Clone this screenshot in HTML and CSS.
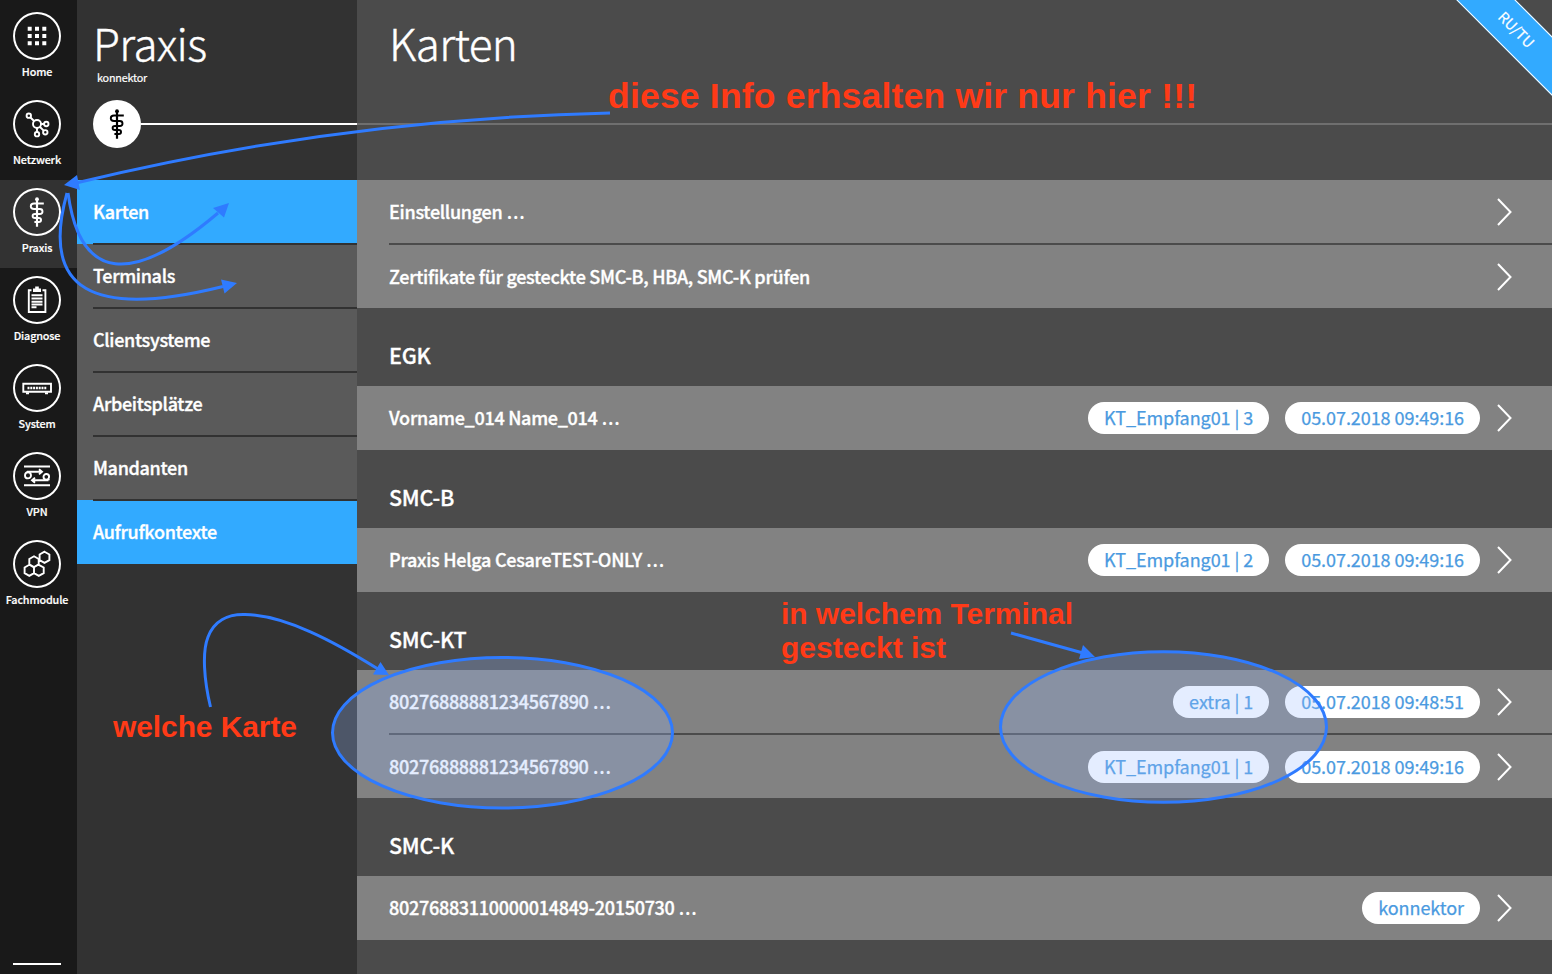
FILE: index.html
```html
<!DOCTYPE html>
<html lang="de">
<head>
<meta charset="utf-8">
<title>Praxis – Karten</title>
<link rel="stylesheet" href="styles.css">
</head>
<body>
<svg class="defs" aria-hidden="true">
  <symbol id="staff" viewBox="-24 -24 48 48">
    <circle cx="0" cy="-12.800" r="1.900" fill="currentColor"/>
    <path d="M0-13V14.700" stroke="currentColor" stroke-width="2.200" fill="none"/>
    <path d="M6.800-8.500H-3C-7.300-8.500-7.300-3-3-3H2.800C6.400-3 6.400 2 2.800 2H-2C-5.200 2-5.200 6-2 6H1.800C4.800 6 4.800 10 1.800 10H-2.600" stroke="currentColor" stroke-width="1.900" fill="none"/>
  </symbol>
  <symbol id="chevron" viewBox="0 0 16 28">
    <path d="M2 1L14.500 14L2 27" stroke="#fff" stroke-width="2" fill="none"/>
  </symbol>
</svg>
<div class="app">
  <nav class="rail">
    <a class="rail-item"><svg class="ring" viewBox="-24 -24 48 48"><path fill="#fff" d="M-9.300-9.300h4v4h-4zM-2-9.300h4v4h-4zM5.300-9.300h4v4h-4zM-9.300-2h4v4h-4zM-2-2h4v4h-4zM5.300-2h4v4h-4zM-9.300 5.300h4v4h-4zM-2 5.300h4v4h-4zM5.300 5.300h4v4h-4z"/></svg><span>Home</span></a>
    <a class="rail-item"><svg class="ring line" viewBox="-24 -24 48 48"><circle r="4"/><circle cx="-8.200" cy="-8.300" r="2.200"/><circle cx="9.300" cy="0" r="2.200"/><circle cx="0" cy="10.200" r="2.200"/><circle cx="8.300" cy="8.300" r="2.200"/><path d="M-6.500-6.500L-3-3M4 0H7M0 4V8M3 3L6.700 6.700"/></svg><span>Netzwerk</span></a>
    <a class="rail-item current"><svg class="ring"><use href="#staff"/></svg><span>Praxis</span></a>
    <a class="rail-item"><svg class="ring line" viewBox="-24 -24 48 48"><path d="M-5.500-9.800H-8.200V12H8.400V-9.800H5.500M-5.500-4.700H5.500M-5.500-1.500H5.500M-5.500 1.700H5.500M-5.500 4.500H5.500M-5.500 7.200H-.5"/><path fill="#fff" stroke="none" d="M-4-11.500H-1.800V-13.500H1.800V-11.500H4V-8H-4z"/></svg><span>Diagnose</span></a>
    <a class="rail-item"><svg class="ring line" viewBox="-24 -24 48 48"><path d="M-13.700-4.200H14V3.800H-13.700z"/><path d="M-9.500 0H10" stroke-width="2.400" stroke-dasharray="2 .8"/><path d="M-11 5.200H-8M8 5.200H11"/></svg><span>System</span></a>
    <a class="rail-item"><svg class="ring line" viewBox="-24 -24 48 48"><path d="M-13-9.500H13M-13 9.200H13M-10-4.200H5M2-6.800L5-4.200L2-1.600M11.500 4.200H-5M-2 1.600L-5 4.200L-2 6.800M-10-4.200L-10.800-3M11.500 4.200L12 3"/><circle cx="-9" cy="-.6" r="3"/><circle cx="9.300" cy=".8" r="2.800"/></svg><span>VPN</span></a>
    <a class="rail-item"><svg class="ring line" viewBox="-24 -24 48 48"><path d="M7.500-12.300l4.900 2.800v5.600L7.500-1.100L2.600-3.900v-5.600zM-3-7.700l4.700 2.700v5.400L-3 3.100L-7.700 .4V-5zM-7.700 .8l4.700 2.700v5.600l-4.700 2.700l-4.700-2.700V3.500zM1.800 .8l4.900 2.700v5.600L1.800 11.800L-3 9.100"/></svg><span>Fachmodule</span></a>
    <div class="rail-end"></div>
  </nav>
  <aside class="sub">
    <header class="sub-head">
      <h1>Praxis</h1>
      <p>konnektor</p>
      <div class="track"><svg class="disc"><use href="#staff"/></svg><i></i></div>
    </header>
    <a class="menu on"><span>Karten</span></a>
    <a class="menu"><span>Terminals</span></a>
    <a class="menu"><span>Clientsysteme</span></a>
    <a class="menu"><span>Arbeitsplätze</span></a>
    <a class="menu"><span>Mandanten</span></a>
    <a class="menu on"><span>Aufrufkontexte</span></a>
  </aside>
  <main class="main">
    <header class="main-head"><h1>Karten</h1></header>
    <section class="group">
      <div class="row"><b>Einstellungen <i>…</i></b><svg class="chev"><use href="#chevron"/></svg></div>
      <div class="row"><b>Zertifikate für gesteckte SMC-B, HBA, SMC-K prüfen</b><svg class="chev"><use href="#chevron"/></svg></div>
    </section>
    <h2>EGK</h2>
    <section class="group">
      <div class="row"><b>Vorname_014 Name_014 <i>…</i></b><span class="pill">KT_Empfang01 | 3</span><span class="pill">05.07.2018 09:49:16</span><svg class="chev"><use href="#chevron"/></svg></div>
    </section>
    <h2>SMC-B</h2>
    <section class="group">
      <div class="row"><b>Praxis Helga CesareTEST-ONLY <i>…</i></b><span class="pill">KT_Empfang01 | 2</span><span class="pill">05.07.2018 09:49:16</span><svg class="chev"><use href="#chevron"/></svg></div>
    </section>
    <h2>SMC-KT</h2>
    <section class="group">
      <div class="row"><b>80276888881234567890 <i>…</i></b><span class="pill">extra | 1</span><span class="pill">05.07.2018 09:48:51</span><svg class="chev"><use href="#chevron"/></svg></div>
      <div class="row"><b>80276888881234567890 <i>…</i></b><span class="pill">KT_Empfang01 | 1</span><span class="pill">05.07.2018 09:49:16</span><svg class="chev"><use href="#chevron"/></svg></div>
    </section>
    <h2>SMC-K</h2>
    <section class="group">
      <div class="row"><b>80276883110000014849-20150730 <i>…</i></b><span class="pill">konnektor</span><svg class="chev"><use href="#chevron"/></svg></div>
    </section>
  </main>
  <div class="ribbon">RU/TU</div>
  <svg class="notes" viewBox="0 0 1552 974">
    <g class="area">
      <ellipse cx="502.500" cy="732.700" rx="170" ry="75.300"/>
      <ellipse cx="1163.500" cy="727" rx="163" ry="75.300"/>
    </g>
    <g class="stroke">
      <path d="M610 113Q340 119 76 183"/>
      <path d="M68 193C80 282 132 286 218 213"/>
      <path d="M67 193C40 290 92 319 223 286.500"/>
      <path d="M210.500 707C204 680 202 652 208 637C214 621 228 614 245 614.500C285 615 335 642 378 669"/>
      <path d="M1011 633L1083 653"/>
    </g>
    <path class="tips" d="M64 185L77 175L80 190zM229 203L213 208L224 217.500zM237 283L221 279.500L224.500 293.500zM389 675L380.500 662L373 674.500zM1095 657L1083 645L1079 659z"/>
    <g class="words">
      <text x="608" y="107.500" font-size="35.500" textLength="589">diese Info erhsalten wir nur hier !!!</text>
      <text x="781" y="624" font-size="30" textLength="292">in welchem Terminal</text>
      <text x="781" y="658" font-size="30" textLength="165">gesteckt ist</text>
      <text x="113" y="736.500" font-size="30" textLength="184">welche Karte</text>
    </g>
  </svg>
</div>
</body>
</html>
```
FILE: styles.css
```css
* { box-sizing: border-box; margin: 0; padding: 0; }
body { background: #4b4b4b; color: #fff; font-family: "Noto Sans CJK SC", "Noto Sans", sans-serif; overflow: hidden; }
.defs { position: absolute; width: 0; height: 0; }
.app { position: relative; display: flex; width: 1552px; height: 974px; overflow: hidden; }

.rail { display: flex; flex-direction: column; width: 77px; padding: 4px 0 9px; background: #191919; }
.rail-item { display: flex; flex-direction: column; align-items: center; height: 88px; padding: 8px 3px 0 0; font-size: 10.8px; font-weight: 500; line-height: 16px; letter-spacing: -.15px; -webkit-text-stroke: .2px #fff; }
.rail-item.current { background: #323232; }
.rail-item span { margin-top: 3px; white-space: nowrap; }
.ring { display: block; width: 48px; height: 48px; border-radius: 50%; box-shadow: inset 0 0 0 2px #fff; color: #fff; }
.line { fill: none; stroke: #fff; stroke-width: 1.9; }
.rail-end { width: 48px; height: 2px; margin: auto 0 0 13px; background: #fff; }

.sub { width: 280px; background: #323232; }
.sub-head { height: 180px; padding: 14px 0 0 16px; }
h1 { font-size: 44px; font-weight: 300; line-height: 56px; letter-spacing: -.6px; -webkit-text-stroke: .4px #fff; }
.sub-head p { width: 60px; margin: 0 0 0 4px; font-size: 10.8px; line-height: 14px; letter-spacing: -.2px; -webkit-text-stroke: .2px #fff; }
.track { display: flex; align-items: center; margin-top: 16px; }
.disc { width: 48px; height: 48px; border-radius: 50%; background: #fff; color: #000; }
.track i { flex: 1; height: 2px; background: #fff; }
.menu { position: relative; display: block; height: 64px; padding-left: 16px; background: #5a5a5a; font-size: 18px; font-weight: 500; line-height: 62px; letter-spacing: -.32px; -webkit-text-stroke: .35px #fff; }
.menu.on { background: #32aaff; }
.menu + .menu::before { content: ""; position: absolute; top: -1px; left: 16px; right: 0; height: 2px; background: #323232; }

.main { flex: 1; }
.main-head { height: 125px; padding: 14px 0 0 32px; margin-bottom: 55px; border-bottom: 2px solid #6f6f6f; }
.row { position: relative; display: flex; align-items: center; height: 64px; padding: 0 40px 0 32px; background: #828282; font-size: 18px; }
.row b { flex: 1; padding-bottom: 2px; font-weight: 500; letter-spacing: -.28px; -webkit-text-stroke: .35px #fff; }
.row b i { font-family: "Noto Sans", sans-serif; font-size: 24px; font-style: normal; font-weight: 400; line-height: 1; -webkit-text-stroke: 0; }
.row + .row { padding-top: 2px; }
.row + .row::before { content: ""; position: absolute; top: -1px; left: 32px; right: 0; height: 2px; background: #4b4b4b; }
.pill { height: 32px; margin-right: 16px; padding: 0 16px; border-radius: 16px; background: #fff; color: #4a9ae0; line-height: 30px; letter-spacing: -.06px; white-space: nowrap; -webkit-text-stroke: .25px #4a9ae0; }
.chev { width: 16px; height: 28px; margin-top: -1px; }
h2 { height: 78px; padding: 8px 0 0 32px; font-size: 21.5px; font-weight: 500; line-height: 78px; letter-spacing: -.2px; -webkit-text-stroke: .3px #fff; }

.ribbon { position: absolute; left: 1416px; top: 9px; width: 200px; height: 42px; border: 1px solid #fff; background: #32aaff; transform: rotate(45deg); font-size: 14.5px; line-height: 38px; text-align: center; -webkit-text-stroke: .2px #fff; }
.notes { position: absolute; inset: 0; width: 1552px; height: 974px; }
.area { fill: rgba(152, 187, 255, .265); stroke: #2f7bff; stroke-width: 3; }
.stroke { fill: none; stroke: #2f7bff; stroke-width: 3; }
.tips { fill: #2f7bff; }
.words { fill: #ff3a17; font-family: "Liberation Sans", sans-serif; font-weight: 700; }
```
